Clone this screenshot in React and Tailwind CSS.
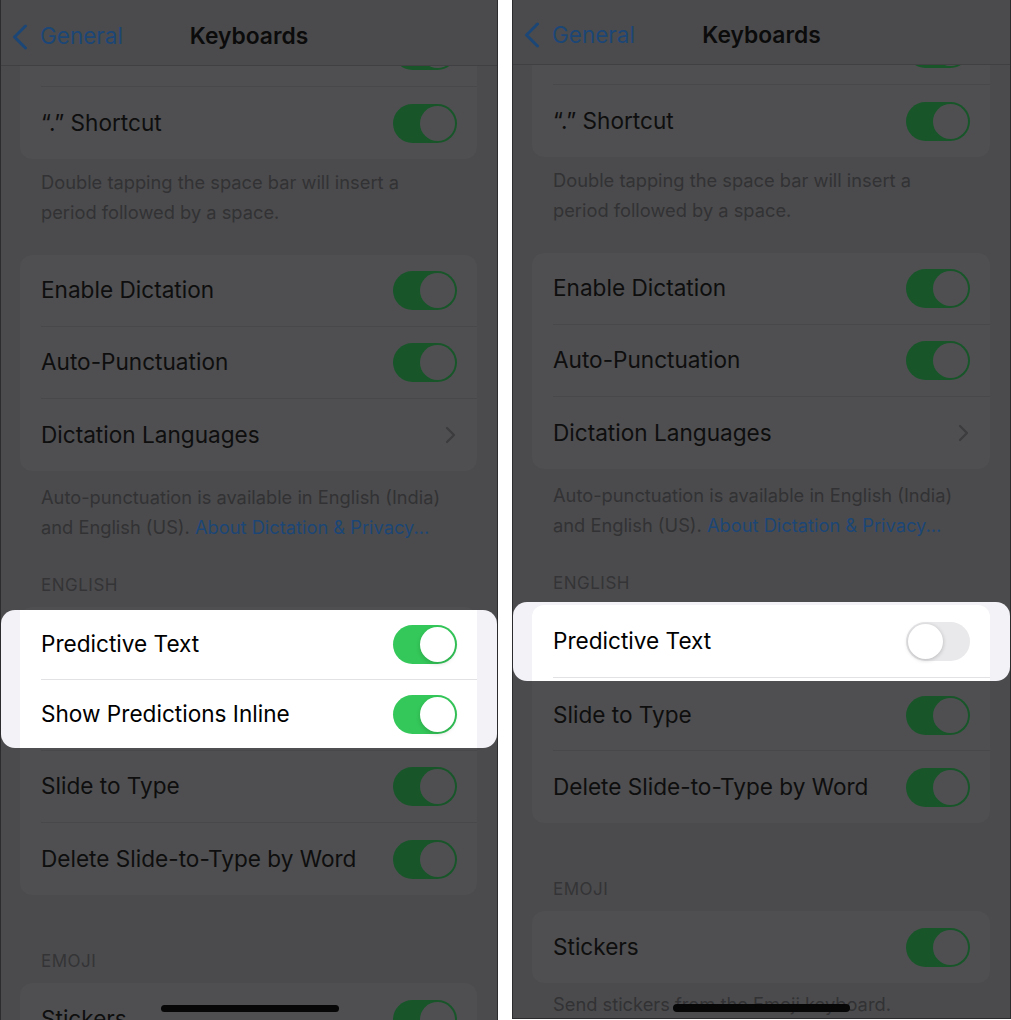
import React from 'react';

function Toggle({ v = 'dim' }) {
  if (v === 'on')
    return (
      <div className="w-[64px] h-[39px] rounded-full bg-[#34c759] p-[2px] flex justify-end shrink-0">
        <div className="w-[35px] h-[35px] rounded-full bg-white shadow-[0_2px_4px_rgba(0,0,0,0.15)]" />
      </div>
    );
  if (v === 'off')
    return (
      <div className="w-[64px] h-[39px] rounded-full bg-[#e9e9eb] p-[2px] flex justify-start shrink-0">
        <div className="w-[35px] h-[35px] rounded-full bg-white shadow-[0_1px_4px_rgba(0,0,0,0.22)]" />
      </div>
    );
  return (
    <div className="w-[64px] h-[39px] rounded-full bg-[#18562a] p-[2px] flex justify-end shrink-0">
      <div className="w-[35px] h-[35px] rounded-full bg-[#4f4f51]" />
    </div>
  );
}

function Chevron() {
  return (
    <svg width="11" height="18" viewBox="0 0 11 18" className="shrink-0 mr-[1px]">
      <path d="M2 2 L9 9 L2 16" fill="none" stroke="#3c3c3e" strokeWidth="2.2" strokeLinecap="round" strokeLinejoin="round" />
    </svg>
  );
}

function Row({ label, right, h, light }) {
  return (
    <div className={`${h} flex items-center justify-between pl-[21px] pr-[20px]`}>
      <span className={`text-[22.6px] leading-none ${light ? 'text-black' : 'text-[#0e0e0e]'}`}>{label}</span>
      {right}
    </div>
  );
}

function Sep({ light }) {
  return <div className={`ml-[21px] h-px ${light ? 'bg-[#e2e2e4]' : 'bg-[#48484a]'}`} />;
}

function Card({ children }) {
  return <div className="ml-[19px] mr-[20px] rounded-[12px] bg-[#4f4f51] flex flex-col">{children}</div>;
}

function Footer({ children, cls }) {
  return (
    <div className={`${cls} pl-[40px] text-[18.3px] leading-[30px] text-[#323234]`}>{children}</div>
  );
}

function Header({ children, cls }) {
  return (
    <div className={`${cls} pl-[40px] text-[17px] leading-[24px] text-[#343436] tracking-[0.5px]`}>{children}</div>
  );
}

function Nav({ h }) {
  return (
    <div className={`relative z-20 ${h} border-b border-[#404042] bg-[#4b4b4d] grid grid-cols-[1fr_auto_1fr] items-center`}>
      <div className="flex items-center pl-[11px]">
        <svg width="16" height="26" viewBox="0 0 16 26">
          <path d="M13.5 2 L2.5 13 L13.5 24" fill="none" stroke="#1c4676" strokeWidth="3" strokeLinecap="round" strokeLinejoin="round" />
        </svg>
        <span className="ml-[12px] text-[22.5px] leading-none text-[#1c4676]">General</span>
      </div>
      <div className="text-[22.8px] leading-none font-semibold text-[#0b0b0b]">Keyboards</div>
      <div />
    </div>
  );
}

function TopPart() {
  return (
    <>
      <Card>
        <Row h="h-[71px]" label="" right={<Toggle />} />
        <Sep />
        <Row h="h-[72px]" label="“.” Shortcut" right={<Toggle />} />
      </Card>
      <Footer cls="pt-[8px] pb-[28px]">
        Double tapping the space bar will insert a<br />period followed by a space.
      </Footer>
      <Card>
        <Row h="h-[71px]" label="Enable Dictation" right={<Toggle />} />
        <Sep />
        <Row h="h-[71px]" label="Auto-Punctuation" right={<Toggle />} />
        <Sep />
        <Row h="h-[72px]" label="Dictation Languages" right={<Chevron />} />
      </Card>
      <Footer cls="pt-[11px] pb-[31px]">
        Auto-punctuation is available in English (India)
        <br />
        and English (US). <span className="text-[#1c4676]">About Dictation &amp; Privacy...</span>
      </Footer>
      <Header cls="pb-[10px]">ENGLISH</Header>
    </>
  );
}

function LeftPhone() {
  return (
    <div className="relative w-[498px] h-[1020px] shrink-0 overflow-hidden bg-[#4b4b4d] border-l border-r border-[#2c2c2e]">
      <Nav h="h-[66px] pt-[8px]" />
      <div className="-mt-[51px] flex flex-col">
        <TopPart />
        <Card>
          <div className="h-[3px]" />
          <div className="relative z-10 -ml-[19px] -mr-[20px] bg-[#f2f2f7] rounded-[14px] overflow-hidden">
            <div className="ml-[19px] mr-[20px] bg-white flex flex-col">
              <Row light h="h-[69px]" label="Predictive Text" right={<Toggle v="on" />} />
              <Sep light />
              <Row light h="h-[68px]" label="Show Predictions Inline" right={<Toggle v="on" />} />
            </div>
          </div>
          <div className="h-[2px]" />
          <Sep />
          <Row h="h-[71px]" label="Slide to Type" right={<Toggle />} />
          <Sep />
          <Row h="h-[72px]" label="Delete Slide-to-Type by Word" right={<Toggle />} />
        </Card>
        <Header cls="pt-[54px] pb-[10px]">EMOJI</Header>
        <Card>
          <Row h="h-[72px]" label="Stickers" right={<Toggle />} />
        </Card>
      </div>
      <div className="absolute left-[160px] top-[1005px] w-[178px] h-[7px] rounded-full bg-[#070707]" />
    </div>
  );
}

function RightPhone() {
  return (
    <div className="relative w-[499px] h-[1019px] shrink-0 overflow-hidden bg-[#4b4b4d] border-l border-r border-b border-[#2c2c2e]">
      <Nav h="h-[65px] pt-[6px]" />
      <div className="-mt-[52px] flex flex-col">
        <TopPart />
        <Card>
          <div className="relative z-10 -mt-[3px] -ml-[19px] -mr-[20px] bg-[#f2f2f7] rounded-[14px] overflow-hidden pt-[3px]">
            <div className="ml-[19px] mr-[20px] bg-white rounded-t-[12px] flex flex-col">
              <Row light h="h-[72px]" label="Predictive Text" right={<Toggle v="off" />} />
              <Sep light />
              <div className="h-[3px]" />
            </div>
          </div>
          <Row h="h-[69px]" label="Slide to Type" right={<Toggle />} />
          <Sep />
          <Row h="h-[72px]" label="Delete Slide-to-Type by Word" right={<Toggle />} />
        </Card>
        <Header cls="pt-[54px] pb-[10px]">EMOJI</Header>
        <Card>
          <Row h="h-[72px]" label="Stickers" right={<Toggle />} />
        </Card>
        <Footer cls="pt-[6px]">Send stickers from the Emoji keyboard.</Footer>
      </div>
      <div className="absolute left-[160px] top-[1004px] w-[177px] h-[8px] rounded-full bg-[#070707]" />
    </div>
  );
}

export default function App() {
  return (
    <div className="w-[1011px] h-[1020px] flex bg-white font-['Inter','Noto_Sans',sans-serif] overflow-hidden">
      <LeftPhone />
      <div className="w-[14px] shrink-0 bg-white" />
      <RightPhone />
    </div>
  );
}
